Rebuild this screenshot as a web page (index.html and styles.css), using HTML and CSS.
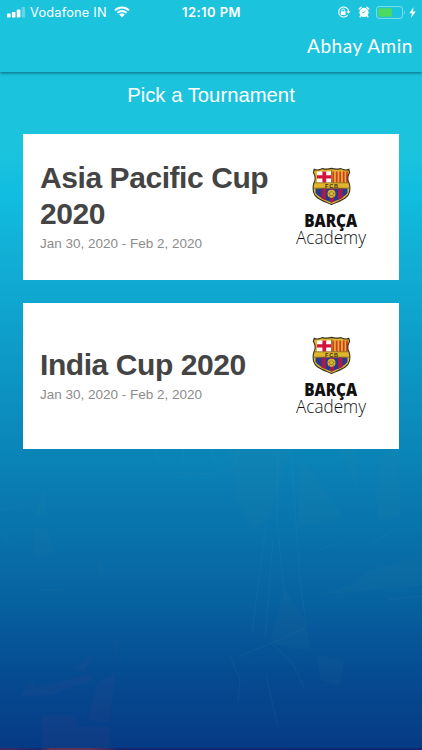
FILE: index.html
```html
<!DOCTYPE html>
<html lang="en">
<head>
    <meta charset="UTF-8">
    <meta name="viewport" content="width=device-width, initial-scale=1.0">
    <title>Pick a Tournament</title>

    <link rel="stylesheet" href="styles.css">
</head>

<body>

    <!-- Faded figures behind the page -->
    <svg class="backdrop" viewBox="0 0 422 750" aria-hidden="true">
        <g fill="#4f8a8a" opacity="0.06">
            <path d="M230 450H290L268 520L252 530L236 500Z"/>
            <path d="M300 453L342 515L330 522L298 527Z"/>
            <path d="M340 450H354L358 492Z"/>
            <path d="M382 452H398L400 515L378 522L376 500Z"/>
            <path d="M42 490L46 490L46 516L35 516Z"/>
            <path d="M34 528H47L53 552L34 557Z"/>
            <path d="M96 560L103 561L104 578L97 574Z"/>
            <path d="M422 556L370 570L350 585L318 595L422 586Z"/>
            <path d="M285 588L306 622L310 650L282 647L270 641Z"/>
            <path d="M318 655L344 660L340 686L320 680Z"/>
        </g>
        <g fill="none" stroke="#6a93a0" stroke-width="1" opacity="0.1">
            <path d="M278 450L277 520L285 600M291 450L300 580L306 625M266 525L252 632M273 540L265 638"/>
            <path d="M176 472Q210 478 250 465M154 450L162 464M184 450L182 466M210 450L216 466M240 450L232 467"/>
            <path d="M240 656L275 642L305 628M270 642L292 662L304 688M230 655L240 680L238 702M266 675L278 727"/>
            <path d="M0 510L36 502M10 545L0 530M40 590H62M318 550L342 542M365 550L395 528M388 600L422 596"/>
        </g>
        <g fill="#7a4a7c" opacity="0.07">
            <path d="M20 696L32 681L35 688L92 673L93 680L52 695Z"/>
            <path d="M73 668L95 654L84 671Z"/>
            <path d="M88 720L98 682L115 673L110 722H96Z"/>
            <path d="M116 641L119 642L113 673Z"/>
            <path d="M42 715H76V727H110V750H42Z"/>
        </g>
    </svg>

    <div class="page">

        <!-- Header -->
        <header class="header">
            <div class="status-bar">
                <div class="status-left">
                    <svg class="signal" viewBox="0 0 19 11" width="19" height="11">
                        <rect x="0" y="6.5" width="3.6" height="4" rx="0.8" fill="#fff"/>
                        <rect x="4.9" y="5" width="3.6" height="5.5" rx="0.8" fill="#fff"/>
                        <rect x="9.8" y="2.5" width="3.6" height="8" rx="0.8" fill="#fff"/>
                        <rect x="14.7" y="0" width="3.4" height="10.5" rx="0.8" fill="#fff" opacity="0.32"/>
                    </svg>
                    <span class="carrier">Vodafone IN</span>
                    <svg class="wifi" viewBox="0 0 16 12" width="16" height="12">
                        <path d="M1 4.4A10 10 0 0 1 15 4.4M3.4 6.9A6.6 6.6 0 0 1 12.6 6.9" fill="none" stroke="#fff" stroke-width="1.9"/>
                        <path d="M5.2 8.6A4 4 0 0 1 10.8 8.6L8 11.4Z" fill="#fff"/>
                    </svg>
                </div>
                <span class="clock">12:10 PM</span>
                <div class="status-right">
                    <svg viewBox="0 0 14 12" width="14" height="12">
                        <path d="M10.8 3.2A5 5 0 1 0 10.6 9.2" fill="none" stroke="#fff" stroke-width="1.1"/>
                        <path d="M10.8 3.2Q11.6 4.2 11.5 6" fill="none" stroke="#fff" stroke-width="1.1"/>
                        <path d="M9.4 5.3H13.4L11.4 7.8Z" fill="#fff"/>
                        <rect x="3.8" y="5.2" width="4.8" height="3.7" rx="0.4" fill="#fff"/>
                        <path d="M4.8 5.4V4.4A1.4 1.4 0 0 1 7.6 4.4V5.4" fill="none" stroke="#fff" stroke-width="0.9"/>
                    </svg>
                    <svg class="alarm" viewBox="0 0 12 12" width="12" height="12">
                        <circle cx="6" cy="6.4" r="4.6" fill="#fff"/>
                        <path d="M1.2 3L3.1 1.2M10.8 3L8.9 1.2M2.8 10L2.2 10.8M9.2 10L9.8 10.8" stroke="#fff" stroke-width="1.5" stroke-linecap="round"/>
                        <path d="M7.6 4.6L6 6.6H4.2" fill="none" stroke="#1bc3dd" stroke-width="0.8"/>
                    </svg>
                    <svg class="battery" viewBox="0 0 30 13" width="30" height="13">
                        <rect x="0.6" y="0.6" width="26" height="11.8" rx="2.6" fill="none" stroke="#fff" stroke-opacity="0.45" stroke-width="1"/>
                        <rect x="2.3" y="2.2" width="13.6" height="8.6" rx="0.8" fill="#4cd964"/>
                        <path d="M28 4.4Q29.6 6.5 28 8.6Z" fill="#fff" opacity="0.5"/>
                    </svg>
                    <svg class="bolt" viewBox="0 0 7 11" width="7" height="11">
                        <path d="M4.6 0L0.4 6.2H3.1L2 11L6.7 4.4H3.9Z" fill="#fff"/>
                    </svg>
                </div>
            </div>
            <div class="user-name">Abhay Amin</div>
        </header>

        <h1 class="page-title">Pick a Tournament</h1>

        <!-- Tournament list -->
        <main class="tournaments">
            <section class="card">
                <div class="card-info">
                    <h2>Asia Pacific Cup 2020</h2>
                    <p>Jan 30, 2020 - Feb 2, 2020</p>
                </div>
                <svg class="logo" viewBox="0 0 74 84" width="74" height="84">
                    <g id="barca-logo">
                        <clipPath id="shield">
                            <path d="M19.2 4.2Q22 5.7 25 4.5L27.5 3.6Q32 4.8 36.5 3.4Q41 4.8 45.5 3.6L48 4.5Q51 5.7 53.8 4.2L54.6 7.5Q52 12 53.2 16Q55.6 20 54.5 27C53 34 43.5 36 36.5 39.6C29.5 36 20 34 18.5 27Q17.4 20 19.8 16Q21 12 18.4 7.5Z"/>
                        </clipPath>
                        <g clip-path="url(#shield)">
                            <rect x="16" y="2" width="41" height="39" fill="#e0b62c"/>
                            <path d="M22 6.5H36V17.5H22Z" fill="#fff"/>
                            <path d="M27.4 6.5H31.2V17.5H27.4ZM22 10.2H36V13.6H22Z" fill="#d5123c"/>
                            <path d="M38.2 6.5V17.5M41.7 6.5V17.5M45.2 6.5V17.5M48.7 6.5V17.5M52 6.5V17.5" stroke="#d23a30" stroke-width="1.8"/>
                            <path d="M20.5 23.5H52.5V28Q49 33 36.5 37.6Q24 33 20.5 28Z" fill="#263b8c"/>
                            <path d="M26.5 23.5H31V35.3L26.5 33.4ZM35 23.5H39V36.7L36.5 37.6L35 37ZM43 23.5H47.5V33L43 35Z" fill="#a41b4d"/>
                            <circle cx="36.5" cy="28.8" r="4" fill="#e0b830"/>
                            <path d="M34.3 28L36.5 26.2L38.7 28L37.8 30.5H35.2ZM34.3 28L32.6 28.5M38.7 28L40.3 28.5M35.2 30.5L34.2 32M37.8 30.5L38.8 32" fill="none" stroke="#79601f" stroke-width="0.6"/>
                            <path d="M18 17.8H55M18 23.2H55M36.5 5V17.5" stroke="#665020" stroke-width="0.6"/>
                        </g>
                        <path d="M19.2 4.2Q22 5.7 25 4.5L27.5 3.6Q32 4.8 36.5 3.4Q41 4.8 45.5 3.6L48 4.5Q51 5.7 53.8 4.2L54.6 7.5Q52 12 53.2 16Q55.6 20 54.5 27C53 34 43.5 36 36.5 39.6C29.5 36 20 34 18.5 27Q17.4 20 19.8 16Q21 12 18.4 7.5Z" fill="none" stroke="#373021" stroke-width="1.1"/>
                        <text class="logo-fcb" x="30" y="22.6" textLength="13">FCB</text>
                        <text class="logo-name" x="9.2" y="62" textLength="53" lengthAdjust="spacingAndGlyphs">BARÇA</text>
                        <text class="logo-sub" x="1" y="79" textLength="70" lengthAdjust="spacingAndGlyphs">Academy</text>
                    </g>
                </svg>
            </section>

            <section class="card">
                <div class="card-info">
                    <h2>India Cup 2020</h2>
                    <p>Jan 30, 2020 - Feb 2, 2020</p>
                </div>
                <svg class="logo" viewBox="0 0 74 84" width="74" height="84">
                    <use href="#barca-logo"/>
                </svg>
            </section>
        </main>

        <div class="bottom-edge"></div>
    </div>

</body>
</html>
```
FILE: styles.css
```css
/* ===== General Styling ===== */
* {
    box-sizing: border-box;
}

body {
    margin: 0;
    height: 750px;
    overflow: hidden;
    font-family: "Liberation Sans", Arial, sans-serif;
    background: linear-gradient(180deg, #1bc3dd 0px, #1bc3dd 150px, #10bde0 195px, #12b0d5 250px, #0fa6d0 300px, #0a84b7 455px, #0765a2 590px, #054a91 680px, #063a84 750px);
}

.backdrop {
    position: absolute;
    top: 0;
    left: 0;
    width: 422px;
    height: 750px;
}

.page {
    position: relative;
    display: flex;
    flex-direction: column;
    height: 750px;
}

/* ===== Header ===== */
.header {
    height: 72px;
    background: #1bc3dd;
    box-shadow: 0 1px 3px rgba(0, 50, 70, 0.65);
    color: #fff;
}

.status-bar {
    display: grid;
    grid-template-columns: 1fr auto 1fr;
    align-items: center;
    height: 24px;
    padding: 0 6px 0 7px;
    font-family: Inter, sans-serif;
    font-size: 13px;
}

.status-left,
.status-right {
    display: flex;
    align-items: center;
}

.status-right {
    justify-content: flex-end;
}

.carrier {
    margin: 0 7px 0 4px;
    font-size: 12.8px;
    letter-spacing: 0.2px;
    white-space: nowrap;
}

.clock {
    font-weight: 600;
    letter-spacing: 0.45px;
}

.alarm {
    margin-left: 7px;
}

.battery {
    margin-left: 6px;
}

.bolt {
    margin-left: 3px;
}

.user-name {
    padding: 10px 9px 0 0;
    font-family: Lato, sans-serif;
    font-size: 19px;
    font-weight: 400;
    line-height: 24px;
    letter-spacing: 0.55px;
    text-align: right;
}

.page-title {
    margin: 11px 0 0;
    font-size: 20.3px;
    font-weight: 400;
    line-height: 24px;
    color: #fff;
    text-align: center;
}

/* ===== Tournament Cards ===== */
.tournaments {
    display: flex;
    flex-direction: column;
    gap: 23px;
    padding: 27px 23px 0;
}

.card {
    display: flex;
    align-items: center;
    justify-content: space-between;
    height: 146px;
    padding: 0 30px 2px 17px;
    background: #fff;
}

.card-info {
    width: 240px;
}

.card h2 {
    margin: 0;
    font-size: 30px;
    line-height: 36px;
    letter-spacing: -0.43px;
    color: #444;
}

.card p {
    margin: 3px 0 0;
    font-size: 13.5px;
    line-height: 18px;
    color: #8c8c8c;
}

/* ===== Logo ===== */
.logo {
    flex: none;
    margin-top: 2px;
}

.logo-fcb {
    font: bold 5.5px "Liberation Sans", sans-serif;
    fill: #3b301b;
}

.logo-name {
    font: 800 17px "Open Sans", sans-serif;
    fill: #111;
}

.logo-sub {
    font: 300 17.5px "Open Sans", sans-serif;
    fill: #111;
}

.bottom-edge {
    height: 2px;
    margin-top: auto;
    background: linear-gradient(90deg, #43285f 0, #142a70 40px, #633153 50px, #633153 90px, #15266e 120px, #10256d 422px);
}
```
